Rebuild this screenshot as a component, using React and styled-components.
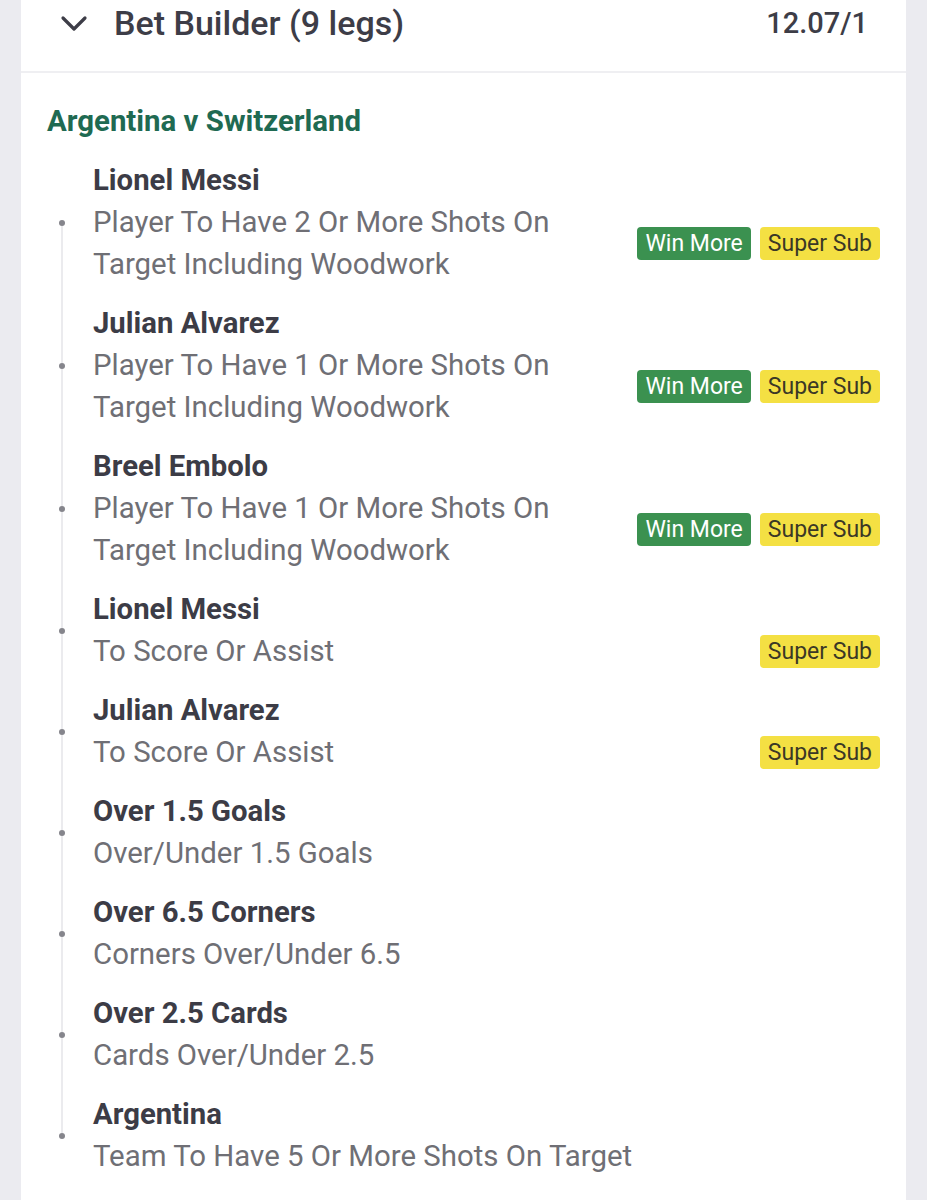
import React from "react";
import styled, { createGlobalStyle } from "styled-components";

const Global = createGlobalStyle`
  html, body { margin: 0; padding: 0; background: #ebebf0; }
  body { font-family: Roboto, "Liberation Sans", Arial, sans-serif; -webkit-font-smoothing: antialiased; }
`;

const Page = styled.div`
  padding: 0 21px;
  min-height: 1200px;
  background: #ebebf0;
`;

const Card = styled.div`
  background: #ffffff;
  min-height: 1200px;
`;

const Header = styled.div`
  height: 73px;
  box-sizing: border-box;
  display: flex;
  align-items: flex-start;
  padding: 3px 38px 0 39px;
  border-bottom: 2px solid #efeff2;
`;

const Chevron = styled.svg`
  width: 28px;
  height: 18px;
  margin-top: 12px;
  flex: none;
`;

const Title = styled.div`
  margin-left: 26px;
  font-size: 34px;
  line-height: 40px;
  font-weight: 500;
  color: #3d3d47;
  flex: 1;
`;

const Odds = styled.div`
  font-size: 29px;
  line-height: 40px;
  font-weight: 500;
  color: #3d3d47;
`;

const Section = styled.div`
  padding: 28px 26px 0 26px;
`;

const EventName = styled.div`
  font-size: 29.4px;
  line-height: 40px;
  font-weight: 700;
  color: #1f6a52;
  margin-bottom: 10px;
`;

const List = styled.div`
  display: flex;
  flex-direction: column;
`;

const Leg = styled.div`
  display: flex;
  align-items: stretch;
`;

const DotCol = styled.div`
  width: 30px;
  flex: none;
  margin-right: 16px;
  display: flex;
  flex-direction: column;
  align-items: center;
`;

const Segment = styled.div`
  flex: 1;
  width: 2px;
  background: ${(p) => (p.$hidden ? "transparent" : "#ebebee")};
`;

const Dot = styled.div`
  width: 6px;
  height: 6px;
  border-radius: 50%;
  background: #85858c;
  flex: none;
`;

const Body = styled.div`
  flex: 1;
  padding: 8px 0 9px;
  min-width: 0;
`;

const Name = styled.div`
  font-size: 29.3px;
  line-height: 42px;
  font-weight: 700;
  color: #3c3c46;
`;

const DescRow = styled.div`
  display: flex;
  align-items: center;
`;

const Desc = styled.div`
  flex: 1;
  max-width: ${(p) => (p.$wide ? "none" : "520px")};
  font-size: 29.4px;
  line-height: 42px;
  font-weight: 400;
  color: #6f6f75;
`;

const Badges = styled.div`
  margin-left: auto;
  display: flex;
  gap: 9px;
  flex: none;
`;

const Badge = styled.span`
  display: inline-block;
  height: 33px;
  line-height: 33px;
  padding: 0 8px;
  border-radius: 4px;
  font-size: 23px;
  font-weight: 400;
  background: ${(p) => (p.$kind === "win" ? "#3b9150" : "#f4e043")};
  color: ${(p) => (p.$kind === "win" ? "#ffffff" : "#3b3826")};
`;

const legs = [
  { name: "Lionel Messi", desc: "Player To Have 2 Or More Shots On Target Including Woodwork", win: true, sub: true },
  { name: "Julian Alvarez", desc: "Player To Have 1 Or More Shots On Target Including Woodwork", win: true, sub: true },
  { name: "Breel Embolo", desc: "Player To Have 1 Or More Shots On Target Including Woodwork", win: true, sub: true },
  { name: "Lionel Messi", desc: "To Score Or Assist", sub: true },
  { name: "Julian Alvarez", desc: "To Score Or Assist", sub: true },
  { name: "Over 1.5 Goals", desc: "Over/Under 1.5 Goals" },
  { name: "Over 6.5 Corners", desc: "Corners Over/Under 6.5" },
  { name: "Over 2.5 Cards", desc: "Cards Over/Under 2.5" },
  { name: "Argentina", desc: "Team To Have 5 Or More Shots On Target", wide: true },
];

export default function App() {
  return (
    <>
      <Global />
      <Page>
        <Card>
          <Header>
            <Chevron viewBox="0 0 28 18">
              <polyline points="3,3 14,14 25,3" fill="none" stroke="#3d3d47" strokeWidth="3.2" strokeLinecap="round" strokeLinejoin="round" />
            </Chevron>
            <Title>Bet Builder (9 legs)</Title>
            <Odds>12.07/1</Odds>
          </Header>
          <Section>
            <EventName>Argentina v Switzerland</EventName>
            <List>
              {legs.map((l, i) => (
                <Leg key={i}>
                  <DotCol>
                    <Segment $hidden={i === 0} />
                    <Dot />
                    <Segment $hidden={i === legs.length - 1} />
                  </DotCol>
                  <Body>
                    <Name>{l.name}</Name>
                    <DescRow>
                      <Desc $wide={l.wide}>{l.desc}</Desc>
                      {(l.win || l.sub) && (
                        <Badges>
                          {l.win && <Badge $kind="win">Win More</Badge>}
                          {l.sub && <Badge $kind="sub">Super Sub</Badge>}
                        </Badges>
                      )}
                    </DescRow>
                  </Body>
                </Leg>
              ))}
            </List>
          </Section>
        </Card>
      </Page>
    </>
  );
}
